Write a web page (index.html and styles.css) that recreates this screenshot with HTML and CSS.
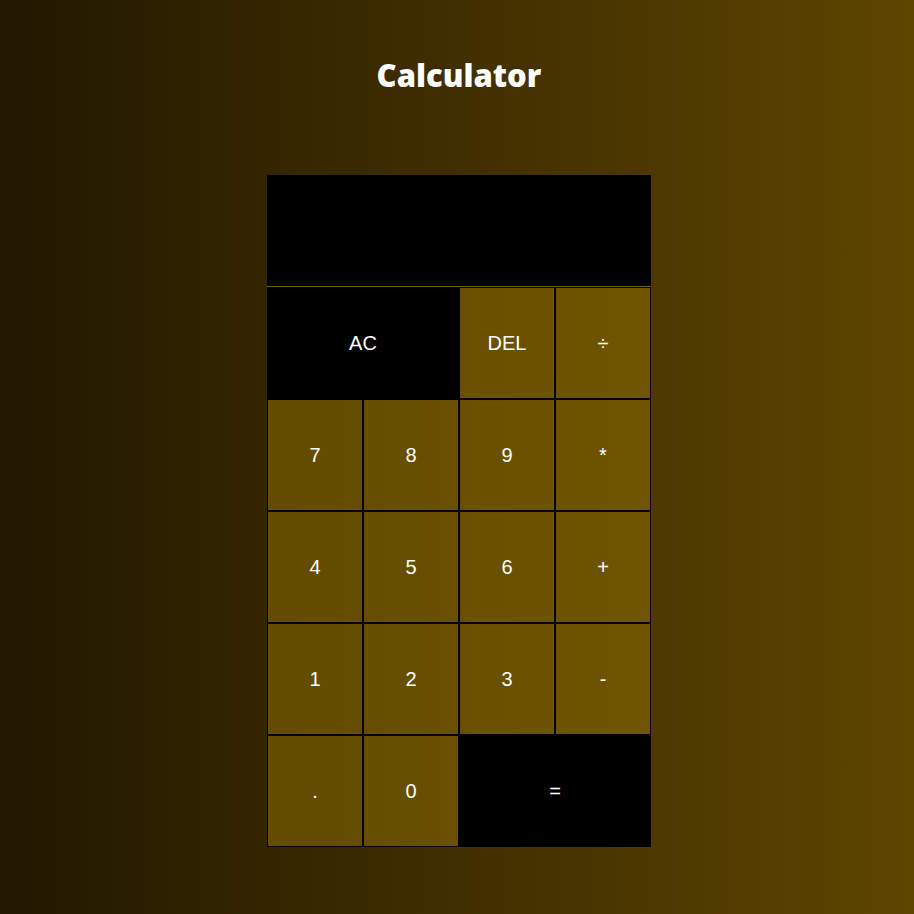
FILE: index.html
```html
<!DOCTYPE html>
<html lang="en">
<head>
<meta charset="UTF-8">
<title>Calculator</title>
<link rel="stylesheet" href="styles.css">
</head>
<body>
<h1 class="title">Calculator</h1>
<div class="calculator">
  <div class="display"></div>
  <button class="key key-dark span-two">AC</button>
  <button class="key">DEL</button>
  <button class="key">÷</button>
  <button class="key">7</button>
  <button class="key">8</button>
  <button class="key">9</button>
  <button class="key">*</button>
  <button class="key">4</button>
  <button class="key">5</button>
  <button class="key">6</button>
  <button class="key">+</button>
  <button class="key">1</button>
  <button class="key">2</button>
  <button class="key">3</button>
  <button class="key">-</button>
  <button class="key">.</button>
  <button class="key">0</button>
  <button class="key key-dark span-two">=</button>
</div>
</body>
</html>
```
FILE: styles.css
```css
* { box-sizing: border-box; }
html, body { margin: 0; padding: 0; }
body {
  min-height: 914px;
  padding-left: 4px;
  background: linear-gradient(to right, #221800, #5e4500);
  display: flex;
  flex-direction: column;
  align-items: center;
}
.title {
  margin: 0;
  padding-top: 56px;
  font-family: "Open Sans", sans-serif;
  font-weight: 800;
  font-size: 31px;
  line-height: 38px;
  color: #ffffff;
}
.calculator {
  margin-top: 81px;
  display: grid;
  grid-template-columns: repeat(4, 96px);
  grid-template-rows: repeat(6, 112px);
}
.display {
  grid-column: 1 / -1;
  background: #000000;
  border-bottom: 1px solid #7a5a00;
}
.key {
  margin: 0;
  padding: 0;
  border: 1px solid #000000;
  background: rgba(145, 114, 0, 0.5);
  color: #ffffff;
  font-family: "Liberation Sans", Arial, sans-serif;
  font-size: 20px;
  cursor: pointer;
}
.key-dark { background: #000000; }
.span-two { grid-column: span 2; }
```
